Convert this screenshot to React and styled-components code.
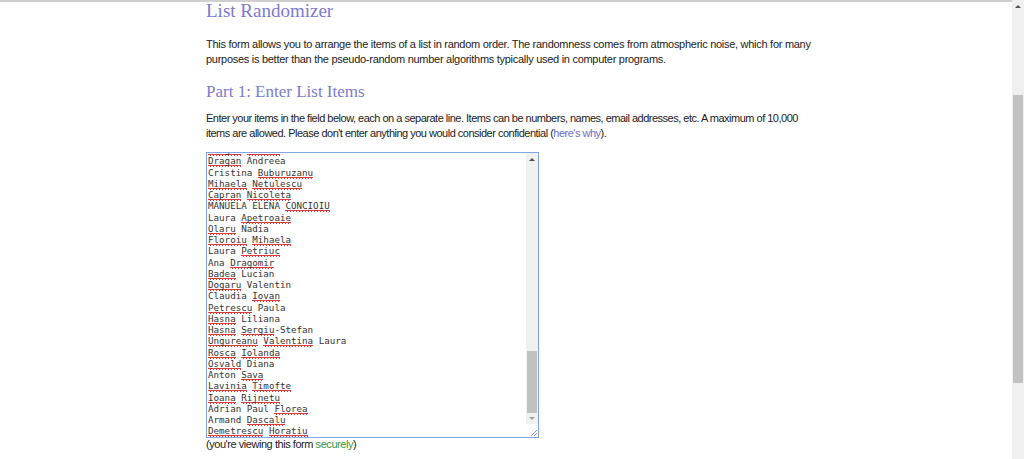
import React from 'react';
import styled, { createGlobalStyle } from 'styled-components';

const GlobalStyle = createGlobalStyle`
  html, body {
    margin: 0;
    padding: 0;
    height: 100%;
    overflow: hidden;
    background: #fff;
  }
  #root {
    height: 100%;
  }
`;

const Page = styled.div`
  display: flex;
  height: 100vh;
`;

const Viewport = styled.div`
  flex: 1;
  border-top: 2px solid #cfcfcf;
  overflow: hidden;
`;

const Column = styled.div`
  width: 607px;
  margin-left: 206px;
  font-family: "Liberation Sans", Arial, sans-serif;
  font-size: 11px;
  color: #222;
`;

const Title = styled.h1`
  margin: -1px 0 0;
  font-family: "Liberation Serif", "Times New Roman", serif;
  font-weight: normal;
  font-size: 19px;
  line-height: 20px;
  color: #7b7bd0;
`;

const SubTitle = styled.h2`
  margin: 15px 0 0;
  font-family: "Liberation Serif", "Times New Roman", serif;
  font-weight: normal;
  font-size: 17px;
  line-height: 20px;
  color: #7b7bd0;
`;

const Text = styled.p`
  margin: ${p => p.$top || 0}px 0 0;
  line-height: 15px;
  letter-spacing: ${p => p.$spacing || 0}px;
`;

const Link = styled.a`
  color: #6d6dc9;
  text-decoration: none;
`;

const ListField = styled.div`
  margin-top: 11px;
  width: 331px;
  height: 284px;
  border: 1px solid #7ea6e0;
  display: flex;
  background: #fff;
`;

const ListBody = styled.div`
  flex: 1;
  overflow: hidden;
  padding-left: 1px;
`;

const Lines = styled.div`
  margin-top: -9px;
  font-family: "DejaVu Sans Mono", "Liberation Mono", monospace;
  font-size: 9.2px;
  line-height: 11.25px;
  color: #333;
`;

const Line = styled.div`
  white-space: pre;
  height: 11.25px;
`;

const Misspelt = styled.span`
  padding-bottom: 1px;
  background-image:
    linear-gradient(45deg, transparent 60%, #e0393c 60%, #e0393c 90%, transparent 90%),
    linear-gradient(-45deg, transparent 60%, #e0393c 60%, #e0393c 90%, transparent 90%);
  background-size: 3px 2px;
  background-repeat: repeat-x;
  background-position: 0 100%;
`;

const FieldBar = styled.div`
  width: 12px;
  display: flex;
  flex-direction: column;
  background: #f0f0f0;
`;

const ArrowCell = styled.div`
  height: ${p => p.$h || 12}px;
  display: flex;
  align-items: center;
  justify-content: center;
  flex-shrink: 0;
`;

const Arrow = styled.span`
  width: 0;
  height: 0;
  border-left: 3px solid transparent;
  border-right: 3px solid transparent;
  ${p => p.$down
    ? 'border-top: 3px solid #a0a0a0;'
    : 'border-bottom: 3px solid #505050;'}
`;

const Track = styled.div`
  flex: 1;
  display: flex;
  flex-direction: column;
  justify-content: ${p => (p.$end ? 'flex-end' : 'flex-start')};
  align-items: center;
`;

const Thumb = styled.div`
  width: 10px;
  height: ${p => p.$h}px;
  margin-top: ${p => p.$top || 0}px;
  background: #c1c1c1;
`;

const Corner = styled.div`
  height: 13px;
  background: #fff;
  display: flex;
  align-items: flex-end;
  justify-content: flex-end;
  flex-shrink: 0;
`;

const Caption = styled.div`
  line-height: 12px;
  letter-spacing: -0.45px;
`;

const Secure = styled.span`
  color: #3a9a3a;
`;

const PageBar = styled.div`
  width: 12px;
  background: #f0f0f0;
  display: flex;
  flex-direction: column;
`;

// words marked by the spell checker are wrapped in *...*
const names = [
  '*Dragoi* *Ionela*',
  '*Dragan* Andreea',
  'Cristina *Buburuzanu*',
  '*Mihaela* *Netulescu*',
  '*Capran* *Nicoleta*',
  'MANUELA ELENA *CONCIOIU*',
  'Laura *Apetroaie*',
  '*Olaru* Nadia',
  '*Floroiu* *Mihaela*',
  'Laura *Petriuc*',
  'Ana *Dragomir*',
  '*Badea* Lucian',
  '*Dogaru* Valentin',
  'Claudia *Iovan*',
  '*Petrescu* Paula',
  '*Hasna* Liliana',
  '*Hasna* *Sergiu*-Stefan',
  '*Ungureanu* *Valentina* Laura',
  '*Rosca* *Iolanda*',
  '*Osvald* Diana',
  'Anton *Sava*',
  '*Lavinia* *Timofte*',
  '*Ioana* *Rijnetu*',
  'Adrian Paul *Florea*',
  'Armand *Dascalu*',
  '*Demetrescu* *Horatiu*',
];

const renderLine = text =>
  text.split(/(\*[^*]+\*)/).filter(Boolean).map((part, i) =>
    part.startsWith('*')
      ? <Misspelt key={i}>{part.slice(1, -1)}</Misspelt>
      : <React.Fragment key={i}>{part}</React.Fragment>
  );

const Grip = () => (
  <svg width="9" height="9" viewBox="0 0 9 9">
    <path d="M8 2 L2 8 M8 5 L5 8" stroke="#9a9a9a" strokeWidth="1" />
  </svg>
);

const App = () => (
  <>
    <GlobalStyle />
    <Page>
      <Viewport>
        <Column>
          <Title>List Randomizer</Title>
          <Text $top={16} $spacing={-0.28}>
            This form allows you to arrange the items of a list in random order. The randomness comes from atmospheric noise, which for many purposes is better than the pseudo-random number algorithms typically used in computer programs.
          </Text>
          <SubTitle>Part 1: Enter List Items</SubTitle>
          <Text $top={9} $spacing={-0.5}>
            Enter your items in the field below, each on a separate line. Items can be numbers, names, email addresses, etc. A maximum of 10,000 items are allowed. Please don't enter anything you would consider confidential (<Link href="#">here's why</Link>).
          </Text>
          <ListField>
            <ListBody>
              <Lines>
                {names.map((n, i) => <Line key={i}>{renderLine(n)}</Line>)}
              </Lines>
            </ListBody>
            <FieldBar>
              <ArrowCell><Arrow /></ArrowCell>
              <Track $end>
                <Thumb $h={62} />
              </Track>
              <ArrowCell $h={11}><Arrow $down /></ArrowCell>
              <Corner><Grip /></Corner>
            </FieldBar>
          </ListField>
          <Caption>(you're viewing this form <Secure>securely</Secure>)</Caption>
        </Column>
      </Viewport>
      <PageBar>
        <ArrowCell><Arrow /></ArrowCell>
        <Track>
          <Thumb $h={288} $top={83} />
        </Track>
      </PageBar>
    </Page>
  </>
);

export default App;
